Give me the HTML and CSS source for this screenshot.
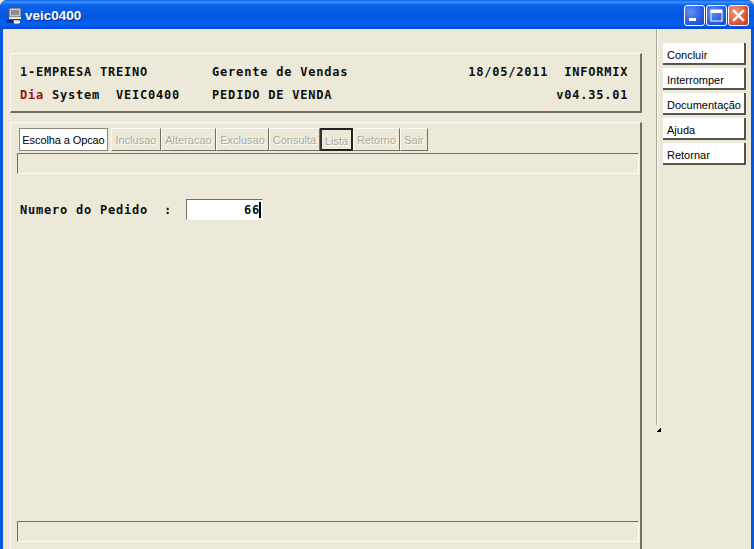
FILE: index.html
```html
<!DOCTYPE html>
<html lang="pt">
<head>
<meta charset="utf-8">
<title>veic0400</title>
<link rel="stylesheet" href="styles.css">
</head>
<body>
<div class="window">
  <header class="titlebar">
    <svg class="app-icon" width="17" height="17" viewBox="0 0 17 17">
      <rect x="2" y="1" width="12" height="9" fill="#c8c8c8" stroke="#55555f"/>
      <rect x="4" y="3" width="8" height="5" fill="#8d8d99"/>
      <rect x="2" y="10" width="12" height="2" fill="#e6e6e6"/>
      <rect x="0" y="13" width="6" height="3" fill="#0a2a9a"/>
      <path d="M6 13h6l2 2-2 2H7z" fill="#f2f2f2" stroke="#223" stroke-width=".6"/>
    </svg>
    <span class="title">veic0400</span>
    <div class="controls">
      <button class="ctl"><svg width="21" height="21" viewBox="0 0 21 21"><rect x="5" y="13" width="7" height="3" fill="#fff"/></svg></button>
      <button class="ctl"><svg width="21" height="21" viewBox="0 0 21 21"><rect x="5" y="5" width="11" height="11" fill="none" stroke="#fff"/><rect x="5" y="5" width="11" height="3" fill="#fff"/></svg></button>
      <button class="ctl close"><svg width="21" height="21" viewBox="0 0 21 21"><path d="M6 6l9 9M15 6l-9 9" stroke="#fff" stroke-width="2.4" stroke-linecap="square"/></svg></button>
    </div>
  </header>
  <div class="client">
    <main class="content">
      <section class="panel header-panel">
        <pre class="term">1-EMPRESA TREINO        Gerente de Vendas               18/05/2011  INFORMIX</pre>
        <pre class="term"><span class="red">Dia</span> System  VEIC0400    PEDIDO DE VENDA                            v04.35.01</pre>
      </section>
      <section class="panel form-panel">
        <nav class="tabs">
          <button class="tab active w1">Escolha a Opcao</button>
          <button class="tab w2">Inclusao</button>
          <button class="tab w3">Alteracao</button>
          <button class="tab w4">Exclusao</button>
          <button class="tab w5">Consulta</button>
          <button class="tab focus w6">Lista</button>
          <button class="tab w7">Retorno</button>
          <button class="tab w8">Sair</button>
        </nav>
        <div class="sunken"></div>
        <div class="field">
          <pre class="term">Numero do Pedido  :</pre>
          <div class="input"><span class="term">66</span><i class="caret"></i></div>
        </div>
        <div class="sunken status"></div>
      </section>
    </main>
    <aside class="side">
      <div class="splitter"><i class="grip"></i></div>
      <div class="actions">
        <button class="action">Concluir</button>
        <button class="action">Interromper</button>
        <button class="action">Documentação</button>
        <button class="action">Ajuda</button>
        <button class="action">Retornar</button>
      </div>
    </aside>
  </div>
</div>
</body>
</html>
```
FILE: styles.css
```css
* { box-sizing: border-box; }
html, body { margin: 0; height: 100%; overflow: hidden; background: #ece9d8; }
button { font: inherit; margin: 0; padding: 0; }

.window { width: 754px; height: 549px; display: flex; flex-direction: column; background: #0a55e0; border-radius: 7px 7px 0 0; overflow: hidden; }

.titlebar { height: 29px; flex: none; display: flex; align-items: center; padding: 2px 5px 0 7px;
  background: linear-gradient(#0a5fe8 0, #3a93ff 2px, #0a62ea 5px, #0355e0 16px, #0360f0 25px, #0247d0 29px); }
.app-icon { flex: none; margin-right: 1px; }
.title { font: bold 13.5px "Liberation Sans", sans-serif; color: #fff; text-shadow: 1px 1px 0 #0a2f9a; }
.controls { margin-left: auto; display: flex; gap: 1px; }
.ctl { width: 21px; height: 21px; border: 1px solid #fff; border-radius: 3px; display: block;
  background: radial-gradient(circle at 30% 30%, #5f8ff5, #2c5fe0 60%, #1d3fc0); }
.ctl svg { display: block; margin: -1px; }
.close { background: radial-gradient(circle at 30% 30%, #f09a80, #e0563a 60%, #bf3a1c); }

.client { flex: 1; display: flex; margin: 0 3px; background: #ece9d8; min-height: 0; }
.content { width: 639px; flex: none; padding: 24px 0 0 7px; display: flex; flex-direction: column; gap: 9px; }

.panel { border: 1px solid; border-color: #fbfaf5 #716f64 #716f64 #fbfaf5; }
.header-panel { height: 60px; border-bottom-width: 2px; border-right-width: 2px; padding: 11px 0 0 9px; display: flex; flex-direction: column; gap: 8px; }
.form-panel { flex: 1; border-bottom: 0; border-right-width: 2px; padding: 5px 1px 7px 6px; display: flex; flex-direction: column; }

.term { margin: 0; font: bold 12px/15px "DejaVu Sans Mono", monospace; letter-spacing: .78px; color: #10100c; white-space: pre; }
.red { color: #a01010; }

.tabs { display: flex; height: 23px; padding-left: 2px; }
.tab { height: 23px; padding-top: 1px; color: #aca899; background: #ece9d8; font: 11px/20px "Liberation Sans", sans-serif; text-shadow: 1px 1px 0 #fff; text-align: center;
  border: 1px solid; border-color: #fbfaf5 #716f64 #716f64 #fbfaf5; }
.active { color: #000; background: #fff; text-shadow: none; border-color: #8a8878; margin-right: 3px; letter-spacing: -.1px; }
.focus { border: 2px solid; border-color: #222 #222 #222 #333; padding-top: 1px; }
.w1 { width: 89px; } .w2 { width: 50px; } .w3 { width: 55px; } .w4 { width: 53px; }
.w5 { width: 51px; } .w6 { width: 33px; } .w7 { width: 47px; } .w8 { width: 28px; }

.sunken { height: 21px; margin-top: 2px; flex: none; border: 1px solid; border-color: #716f64 #fbfaf5 #fbfaf5 #716f64; }
.status { margin-top: auto; }

.field { display: flex; align-items: center; margin: 25px 0 0 3px; }
.field > .term { width: 166px; padding-top: 1px; }
.input { width: 77px; height: 21px; background: #fff; border: 1px solid; border-color: #716f64 #fbfaf5 #fbfaf5 #716f64; display: flex; align-items: center; justify-content: flex-end; padding-right: 1px; }
.input .term { line-height: 18px; padding-top: 1px; }
.caret { width: 2px; height: 16px; background: #000; margin: 0 0 0 -1px; flex: none; }

.side { flex: 1; display: flex; padding-left: 14px; }
.splitter { width: 2px; height: 396px; flex: none; border-left: 1px solid #aca899; background: #fff; position: relative; }
.grip { position: absolute; left: -1px; top: 399px; width: 5px; height: 4px; background: linear-gradient(135deg, transparent 50%, #000 50%); }
.actions { padding: 14px 0 0 5px; display: flex; flex-direction: column; gap: 3px; }
.action { width: 83px; height: 22px; background: #fff; color: #000; font: 11px/18px "Liberation Sans", sans-serif; text-align: left; padding: 3px 0 0 4px; white-space: nowrap;
  border: 0; border-right: 2px solid #55544a; border-bottom: 2px solid #55544a; }
```
